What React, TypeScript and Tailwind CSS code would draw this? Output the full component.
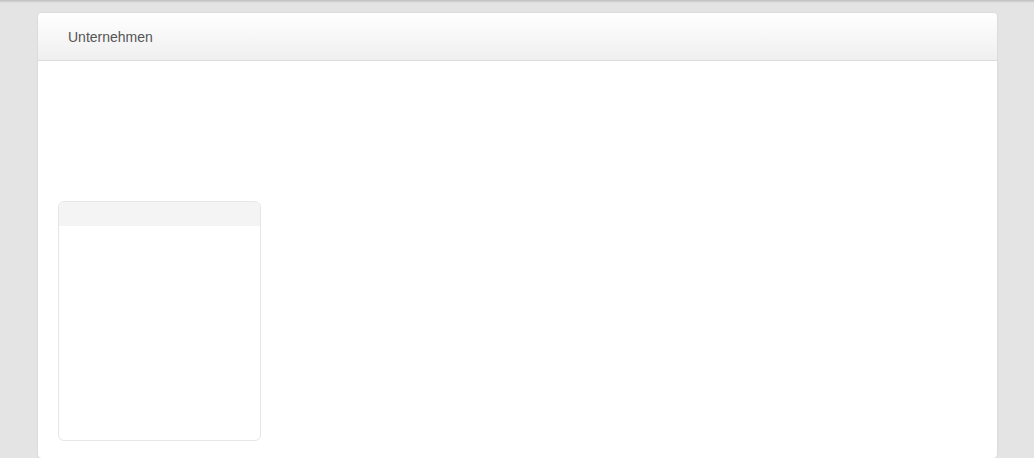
export default function App() {
    return (
        <main
            className="relative h-[458px] w-full overflow-hidden bg-[#e4e4e4]"
            style={{ fontFamily: '"Liberation Sans", Arial, sans-serif' }}
        >
            {/* obere Schattenkante */}
            <div className="absolute inset-x-0 top-0 h-[3px] bg-gradient-to-b from-[#bdbdbd] to-[#e4e4e4]" />

            <div className="pl-[38px] pr-[37px] pt-[13px]">
                <section className="h-[445px] rounded-[4px] bg-white shadow-[0_0_2px_rgba(0,0,0,0.12)]">
                    {/* Kopfzeile */}
                    <header className="flex h-[48px] items-center rounded-t-[4px] border-b border-[#dcdcdc] bg-gradient-to-b from-[#ffffff] to-[#efefef] px-[30px] pt-[2px]">
                        <h1 className="text-[14px] text-[#555555]">Unternehmen</h1>
                    </header>

                    <div className="px-5 pt-[140px]">
                        <div className="h-[240px] w-[203px] overflow-hidden rounded-[6px] border border-[#e6e6e6] bg-white">
                            <div className="h-[24px] bg-[#f4f4f4]" />
                        </div>
                    </div>
                </section>
            </div>
        </main>
    );
}
